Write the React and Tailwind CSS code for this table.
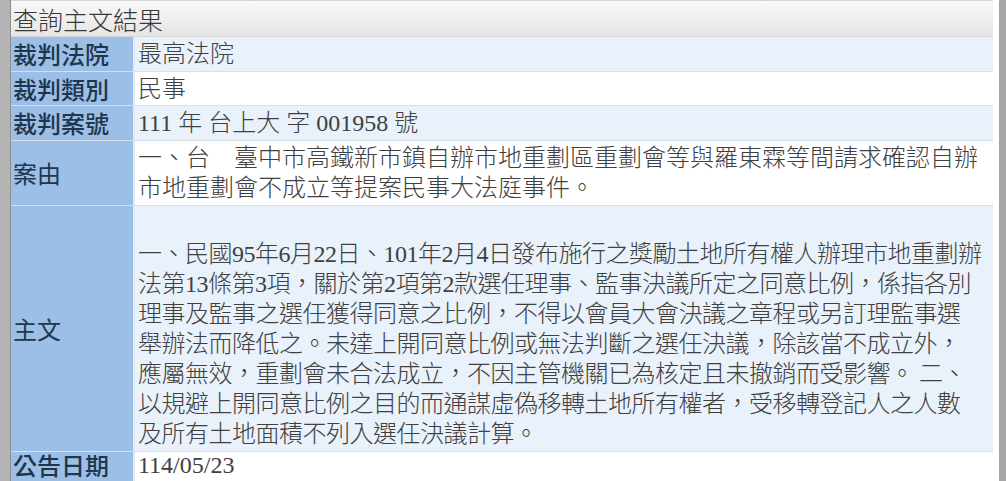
const rows = [
	{ label: "裁判法院", bold: true, h: "h-[34px]", bg: "bg-[#e9f1fa]", lines: ["最高法院"] },
	{ label: "裁判類別", bold: true, h: "h-[34px]", bg: "bg-white", lines: ["民事"] },
	{ label: "裁判案號", bold: true, h: "h-[35px]", bg: "bg-[#e9f1fa]", lines: ["111 年 台上大 字 001958 號"] },
	{
		label: "案由",
		bold: false,
		h: "h-[65px]",
		bg: "bg-white",
		lines: [
			"一、台\u3000臺中市高鐵新市鎮自辦市地重劃區重劃會等與羅東霖等間請求確認自辦",
			"市地重劃會不成立等提案民事大法庭事件。",
		],
	},
	{
		label: "主文",
		bold: false,
		h: "h-[246px]",
		bg: "bg-[#e9f1fa]",
		tight: true,
		lines: [
			"\u00a0",
			"一、民國95年6月22日、101年2月4日發布施行之獎勵土地所有權人辦理市地重劃辦",
			"法第13條第3項，關於第2項第2款選任理事、監事決議所定之同意比例，係指各別",
			"理事及監事之選任獲得同意之比例，不得以會員大會決議之章程或另訂理監事選",
			"舉辦法而降低之。未達上開同意比例或無法判斷之選任決議，除該當不成立外，",
			"應屬無效，重劃會未合法成立，不因主管機關已為核定且未撤銷而受影響。 二、",
			"以規避上開同意比例之目的而通謀虛偽移轉土地所有權者，受移轉登記人之人數",
			"及所有土地面積不列入選任決議計算。",
		],
	},
	// last row is cut by the window, so only 30px of it shows
	{ label: "公告日期", bold: true, h: "h-[30px]", bg: "bg-white", last: true, lines: ["114/05/23"] },
];

const App = () => {
	return (
		<div className="flex w-[1006px] h-[481px] overflow-hidden bg-[#a9a9a9]">
			{/* page behind the dialog */}
			<div className="w-[11px] shrink-0 bg-[#b4b4b4] border-r border-[#8d8d8d]" />

			<div className="flex flex-1 bg-white pr-[6px]">
				<div className="flex-1 flex flex-col">
					<div className="h-[37px] shrink-0 flex items-center pl-[2px] border-t border-b border-[#d6d6d6] bg-gradient-to-b from-[#f8f8f8] to-[#e6e6e6] text-[25px] leading-[30px] text-[#383838] font-['Noto_Sans_CJK_TC',sans-serif] font-light">
						查詢主文結果
					</div>

					{rows.map((row, i) => (
						<div
							key={row.label}
							className={`flex shrink-0 ${row.h} ${i > 0 ? "border-t border-[#d8dfe7]" : ""}`}
						>
							<div
								className={`w-[124px] shrink-0 flex pl-[2px] bg-[#9bbfe7] border-r-2 border-[#e3ecf6] text-[24px] text-[#21354c] font-['Noto_Sans_CJK_TC',sans-serif] ${row.bold ? "font-medium" : "font-normal"} ${row.last ? "items-start leading-[26px]" : "items-center leading-[30px]"}`}
							>
								{row.label}
							</div>
							<div
								className={`flex-1 flex flex-col pl-[3px] ${row.bg} text-[24px] text-[#404040] font-['Liberation_Serif','Noto_Sans_CJK_TC',serif] font-light whitespace-nowrap overflow-hidden ${row.tight ? "tracking-[-0.5px]" : ""} ${row.last ? "justify-start leading-[26px]" : "justify-center leading-[30px]"}`}
							>
								{row.lines.map((line, j) => (
									<div key={j}>{line}</div>
								))}
							</div>
						</div>
					))}
				</div>
			</div>

			<div className="w-[7px] shrink-0 bg-[#a6a6a6]" />
		</div>
	);
};

export default App;
